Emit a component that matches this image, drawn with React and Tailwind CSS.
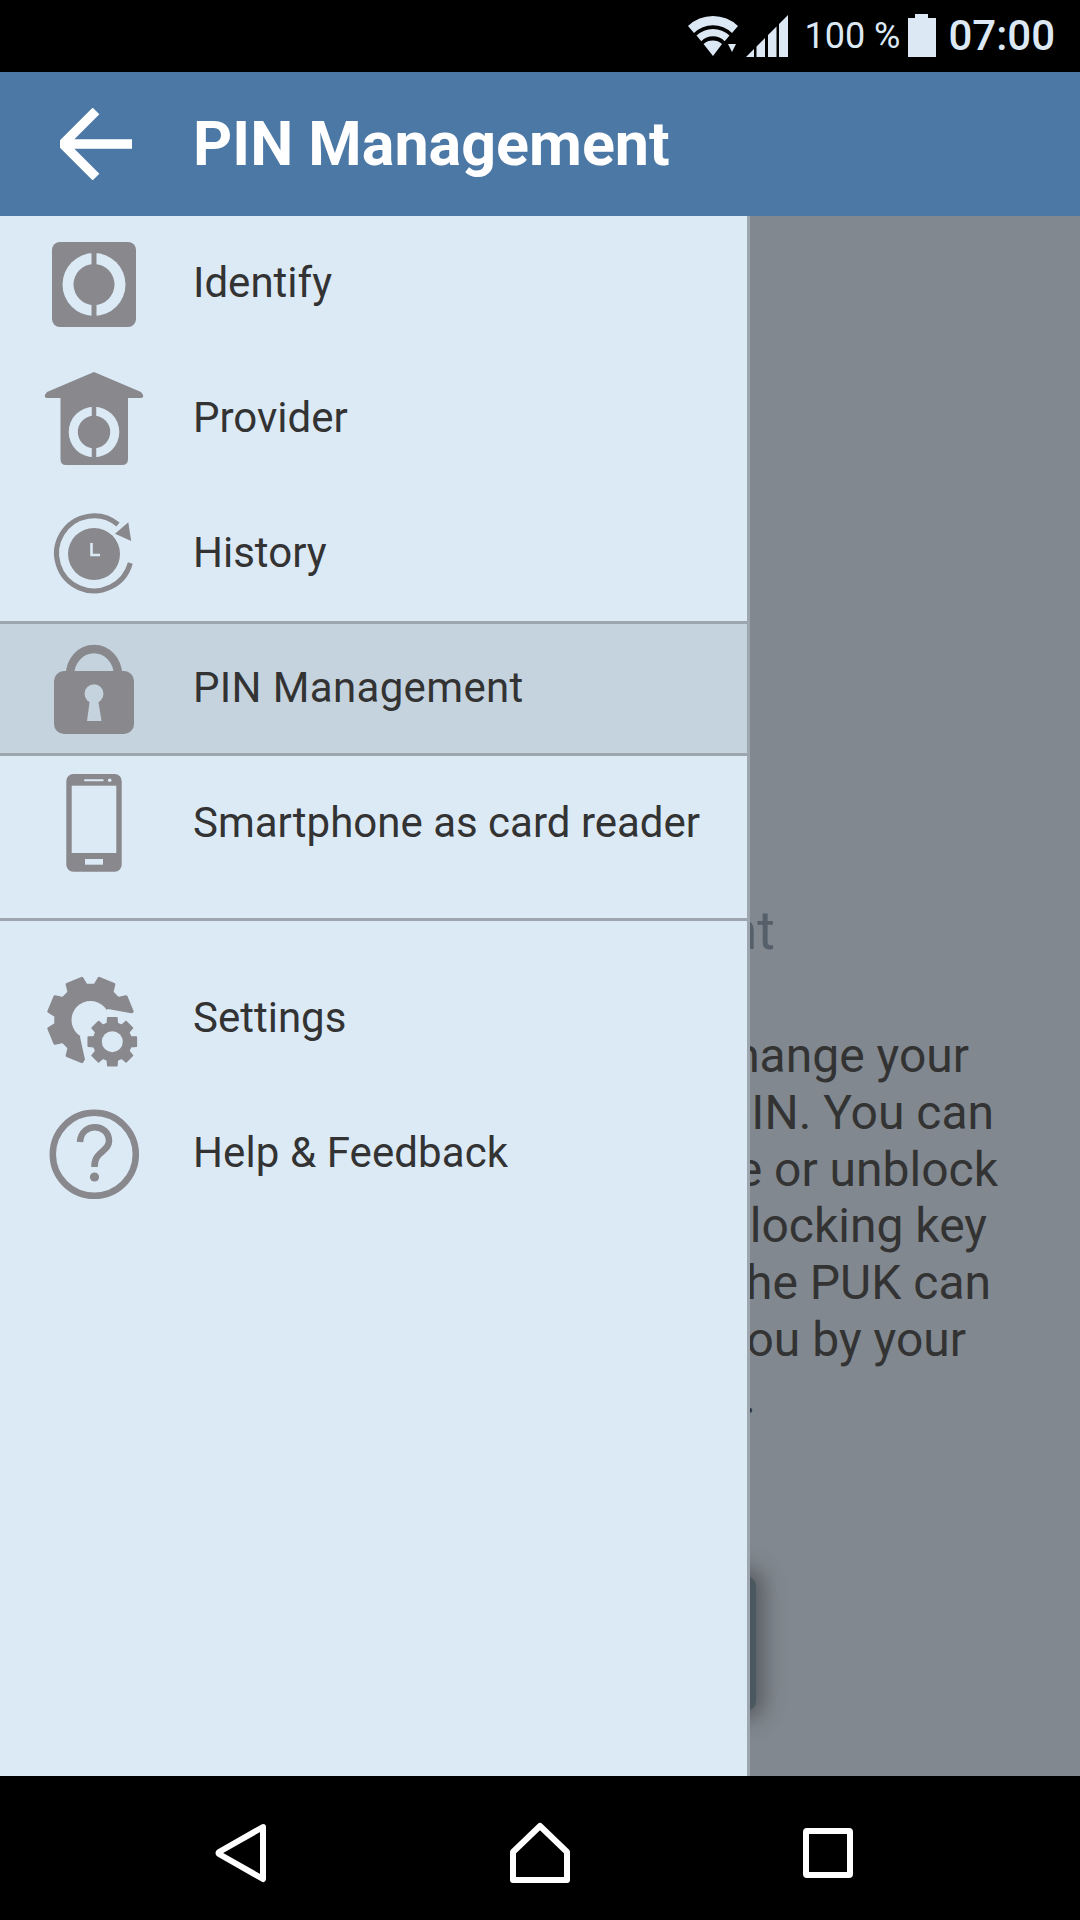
import React from "react";

const G = "#88888d";
const BG = "#dceaf6";

function gearPath(cx, cy, rOut, rIn, teeth, rot = 0) {
  const pts = [];
  const step = (Math.PI * 2) / teeth;
  for (let i = 0; i < teeth; i++) {
    const a = i * step - Math.PI / 2 + rot;
    const w = step * 0.24;
    const base = step * 0.34;
    pts.push([a - base, rIn], [a - w, rOut], [a + w, rOut], [a + base, rIn]);
  }
  return (
    pts
      .map(([a, r], i) => `${i ? "L" : "M"}${(cx + r * Math.cos(a)).toFixed(2)} ${(cy + r * Math.sin(a)).toFixed(2)}`)
      .join(" ") + "Z"
  );
}

function Icon({ children }) {
  return (
    <svg viewBox="0 0 100 100" className="w-[100px] h-[100px] shrink-0 overflow-visible">
      {children}
    </svg>
  );
}

function Ring({ cx, cy, outer, inner, bar, bg = BG }) {
  return (
    <>
      <circle cx={cx} cy={cy} r={outer} fill={bg} />
      <circle cx={cx} cy={cy} r={inner} fill={G} />
      <rect x={cx - bar / 2} y={cy - outer - 0.5} width={bar} height={outer * 2 + 1} fill={G} />
    </>
  );
}

const IdentifyIcon = () => (
  <Icon>
    <rect x="8" y="8" width="84" height="85" rx="8" fill={G} />
    <Ring cx={50} cy={50.5} outer={31.5} inner={20.5} bar={5} />
  </Icon>
);

const ProviderIcon = () => (
  <Icon>
    <path d="M50 3 L97 23 Q102 29 96 29 L84 29 L84 90 Q84 96 78 96 L22 96 Q16.5 96 16.5 90 L16.5 29 L4 29 Q-2 29 3 23 Z" fill={G} />
    <Ring cx={50} cy={63} outer={25.3} inner={16.2} bar={4.5} />
  </Icon>
);

const HistoryIcon = () => (
  <Icon>
    <path d="M74 20.5 A37.5 37.5 0 1 0 86.3 59" fill="none" stroke={G} strokeWidth="5" />
    <path d="M84.3 18.3 L87.2 37 L71 29.7 Z" fill={G} />
    <circle cx="50" cy="50" r="26" fill={G} />
    <path d="M50.5 39 L50.5 51 L59 51" transform="translate(-3 0)" fill="none" stroke={BG} strokeWidth="2.6" />
  </Icon>
);

const LockIcon = () => {
  const bg = "#c5d3de";
  return (
    <Icon>
      <path d="M26 36 A24 26 0 0 1 74 36" fill="none" stroke={G} strokeWidth="8.5" />
      <rect x="10" y="32" width="80" height="63" rx="10" fill={G} />
      <circle cx="50" cy="54.7" r="9.5" fill={bg} />
      <path d="M46 60 L54 60 L57.5 82 L43 82 Z" fill={bg} />
    </Icon>
  );
};

const PhoneIcon = () => (
  <Icon>
    <rect x="22.3" y="0" width="55.4" height="97.7" rx="7" fill={G} />
    <rect x="27.7" y="11.7" width="44.6" height="67.3" fill={BG} />
    <rect x="40" y="5.3" width="19.7" height="2" rx="1" fill={BG} />
    <circle cx="65.7" cy="6.3" r="1.8" fill={BG} />
    <rect x="41" y="85" width="18" height="5.7" fill={BG} />
  </Icon>
);

const SettingsIcon = () => (
  <Icon>
    <path d={gearPath(46.5, 51, 42.5, 35, 8, Math.PI / 8)} fill={G} stroke={G} strokeWidth="3" strokeLinejoin="round" />
    <circle cx="46.5" cy="51" r="19" fill={BG} />
    <path d="M46 51 L64 40 L94 45.5 L102 102 L43.5 102 L36 68 Z" fill={BG} />
    <path d={gearPath(68.3, 72.7, 24.5, 19, 8)} fill={G} stroke={G} strokeWidth="1.5" strokeLinejoin="round" />
    <circle cx="68.3" cy="72.7" r="10.5" fill={BG} />
  </Icon>
);

const HelpIcon = () => (
  <Icon>
    <circle cx="50.3" cy="50.3" r="41.5" fill="none" stroke={G} strokeWidth="6.5" />
    <path d="M36 38 C37 18 65 19 65 37 C65 48 50 47 50.5 63" fill="none" stroke={G} strokeWidth="6.5" />
    <circle cx="50.5" cy="73" r="4.6" fill={G} />
  </Icon>
);

function Row({ icon, label, className = "", labelClass = "" }) {
  return (
    <div className={`flex items-center h-[135px] pl-[44px] gap-[49px] ${className}`}>
      {icon}
      <span className={`text-[42px] leading-none pb-[2px] text-[#333333] whitespace-nowrap ${labelClass}`}>{label}</span>
    </div>
  );
}

const lines = [
  ["Here you can change your", "pr-[111px]"],
  ["card PIN. You can", "pr-[86px]"],
  ["also change or unblock", "pr-[82px]"],
  ["with the unblocking key", "pr-[93px]"],
  ["(PUK). the PUK can", "pr-[89px]"],
  ["be provided to you by your", "pr-[114px]"],
  ["provider.", "pr-[324px]"],
];

export default function App() {
  return (
    <div className="w-[1080px] h-[1920px] flex flex-col overflow-hidden bg-black font-['Roboto',sans-serif]">
      {/* status bar */}
      <div className="h-[72px] shrink-0 bg-black flex items-center justify-end pr-[25px] text-[#dce9f5]">
        <svg width="50" height="42" viewBox="0 0 50 42" className="mr-[8px] -mt-[1px]">
          <path d="M0 11 A36 36 0 0 1 50 11 L44 18 A27 27 0 0 0 6 18 Z" fill="#dce9f5" />
          <path d="M8.5 20.5 A24 24 0 0 1 41.5 20.5 L36.7 26.3 A16 16 0 0 0 13.3 26.3 Z" fill="#dce9f5" />
          <path d="M15.5 29 A14 14 0 0 1 34 29 L25 41 Z" fill="#dce9f5" />
          <path d="M40 29 L48 29 L44 37 Z" fill="#dce9f5" />
        </svg>
        <svg width="42" height="42" viewBox="0 0 42 42" className="mr-[16px]">
          <path d="M0 42 L8 34 L8 42 Z M10.5 31.5 L19 23 L19 42 L10.5 42 Z M22 20 L30.5 11.5 L30.5 42 L22 42 Z M33 9 L42 0 L42 42 L33 42 Z" fill="#dce9f5" />
        </svg>
        <span className="text-[36px] leading-none mr-[8px] whitespace-nowrap">100 %</span>
        <svg width="28" height="43" viewBox="0 0 28 43" className="mr-[12px] -mt-[1px]">
          <path d="M7 0 H20 V4 H28 V43 H0 V4 H7 Z" fill="#dce9f5" />
        </svg>
        <span className="text-[42px] leading-none font-medium whitespace-nowrap">07:00</span>
      </div>

      {/* app bar */}
      <div className="h-[144px] shrink-0 bg-[#4c78a5] flex items-center pl-[60px] gap-[61px]">
        <svg width="72" height="72" viewBox="0 0 72 72" className="shrink-0">
          <path d="M72 36 H6 M36 3 L3 36 L36 69" fill="none" stroke="#ffffff" strokeWidth="9.5" />
        </svg>
        <span className="text-[61px] leading-none font-bold text-white whitespace-nowrap">PIN Management</span>
      </div>

      {/* main */}
      <div className="relative h-[1560px] shrink-0 bg-[#81888f] overflow-hidden">
        <div className="flex flex-col pt-[682px]">
          <div className="h-[66px] text-[54px] leading-[66px] text-[#55606b] text-right pr-[305px] whitespace-nowrap">
            PIN Management
          </div>
          <div className="flex flex-col mt-[64px] text-[48px] leading-[56.8px] text-[#333333]">
            {lines.map(([t, p]) => (
              <div key={t} className={`text-right whitespace-nowrap ${p}`}>
                {t}
              </div>
            ))}
          </div>
          <div className="mt-[150px] ml-[300px] w-[456px] h-[135px] rounded-r-[10px] bg-[#4c5860] shadow-[0_0_20px_8px_rgba(70,72,78,0.7)]" />
        </div>

        {/* drawer */}
        <div className="absolute inset-y-0 left-0 w-[750px] bg-[#dceaf6] border-r-[3px] border-[#9da6ae] flex flex-col">
          <Row icon={<IdentifyIcon />} label="Identify" />
          <Row icon={<ProviderIcon />} label="Provider" />
          <Row icon={<HistoryIcon />} label="History" />
          <Row
            icon={<LockIcon />}
            label="PIN Management"
            className="bg-[#c5d3de] border-y-[3px] border-[#9da6ae]"
            labelClass="tracking-[0.35px]"
          />
          <Row icon={<PhoneIcon />} label="Smartphone as card reader" />
          <div className="h-[27px]" />
          <div className="h-[3px] bg-[#9da6ae]" />
          <div className="h-[30px]" />
          <Row icon={<SettingsIcon />} label="Settings" />
          <Row icon={<HelpIcon />} label="Help & Feedback" labelClass="tracking-[0.1px]" />
        </div>
      </div>

      {/* nav bar */}
      <div className="h-[144px] shrink-0 bg-black flex items-center pl-[213px] pt-[9px]">
        <svg width="56" height="60" viewBox="0 0 56 60" className="shrink-0">
          <path d="M50 5 L6 30 Q5 31 6 32 L50 57 Z" transform="translate(0 -1)" fill="none" stroke="#ffffff" strokeWidth="6" strokeLinejoin="round" />
        </svg>
        <svg width="60" height="62" viewBox="0 0 60 62" className="shrink-0 ml-[241px]">
          <path d="M30 4 L57 30 V58 H3 V30 Z" fill="none" stroke="#ffffff" strokeWidth="6" strokeLinejoin="round" />
        </svg>
        <svg width="50" height="50" viewBox="0 0 50 50" className="shrink-0 ml-[233px]">
          <rect x="3" y="3" width="44" height="44" rx="1" fill="none" stroke="#ffffff" strokeWidth="6" />
        </svg>
      </div>
    </div>
  );
}
